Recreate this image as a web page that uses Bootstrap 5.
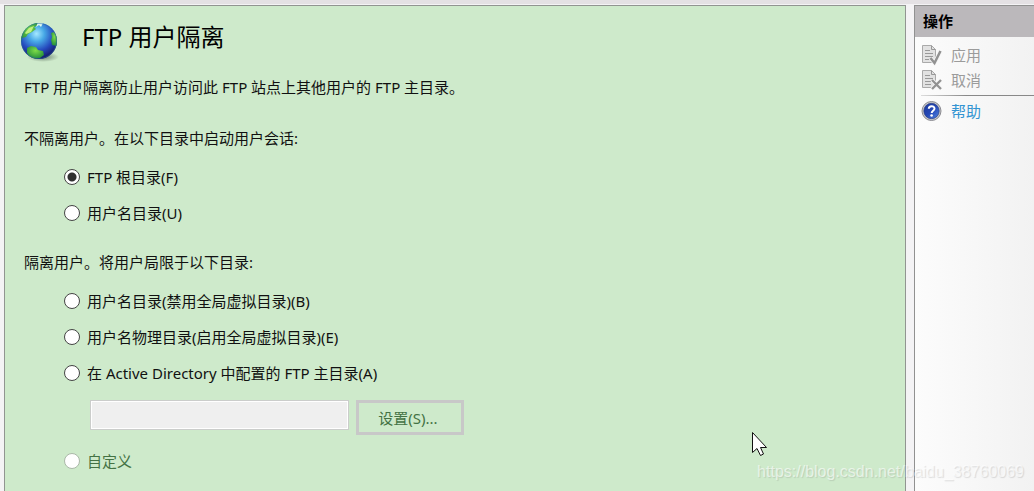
<!DOCTYPE html>
<html lang="zh-CN">
<head>
<meta charset="utf-8">
<meta name="viewport" content="width=device-width, initial-scale=1">
<title>FTP 用户隔离</title>
<link href="https://cdn.jsdelivr.net/npm/bootstrap@5.3.0/dist/css/bootstrap.min.css" rel="stylesheet">
<style>
  body { font: 15px/24px "Noto Sans", "Noto Sans CJK SC", sans-serif; color: #111; background: #f4f3f5; }
  .window-frame { border-top: 4px solid #e4e1e4; padding: 1px 0 0 4px; gap: 8px; }
  .feature-pane { background: #ceeacb; border: 1px solid #919591; border-bottom: 0; padding: 11px 19px 0; min-width: 0; }
  .feature-title { font-size: 24px; line-height: 40px; color: #000; }
  .feature-head { gap: 22px; height: 58px; }
  .globe { width: 42px; height: 42px; margin: 4px 0 0 -6px; }
  .intro { margin-bottom: 27px; }
  .choices { padding-left: 40px; margin-top: 9px; }
  .choice { height: 36px; gap: 7px; }
  .choice .form-check-input { width: 16px; height: 16px; margin: 0; border: 1px solid #444; background-color: #fff; flex: none; }
  .choice .form-check-input:checked { background: #fff radial-gradient(circle, #303030 4px, transparent 5px); }
  .choice .form-check-input:disabled { border-color: #aab8a8; opacity: 1; }
  .choice .form-check-input:disabled ~ label { color: #447244; opacity: 1; }
  .second-heading { margin-top: 19px; }
  .field-row { padding-left: 26px; margin: 9px 0 8px; gap: 7px; }
  .path-box { width: 259px; height: 30px; border: 1px solid #cbcdcb; border-radius: 0; box-shadow: inset 0 0 0 1px #fff; }
  .path-box:disabled { background: #efefef; }
  .set-btn, .set-btn:disabled { width: 108px; height: 35px; padding: 0 4px 0 0; font-size: 15px; line-height: 24px; border: 3px solid #c8c8c8; border-radius: 0; background: transparent; color: #447244; opacity: 1; }
  .action-pane { width: 120px; flex: none; border: 1px solid #919191; border-right: 0; border-bottom: 0; background: linear-gradient(90deg, #fcfcfc, #f2f2f2); }
  .action-title { font-size: 15px; line-height: 24px; font-weight: 700; color: #000; background: #bbb8bb; padding: 3px 8px 4px; }
  .action-list { padding: 5px 0 0 6px; }
  .action-item { display: flex; align-items: center; gap: 8px; height: 25px; padding: 0; border: 0; background: none; color: #9b9b9b; text-decoration: none; }
  .action-item svg { width: 22px; height: 22px; flex: none; }
  a.action-item { color: #3394d2; }
  .divider { height: 1px; margin: 3px 0 2px; background: linear-gradient(90deg, #ddd, #888 40%); }
  .pointer { right: 267px; bottom: 34px; width: 15px; height: 26px; }
  .watermark { right: 10px; bottom: 7px; font: 16px/24px "Liberation Sans", sans-serif; color: rgba(255,255,255,.6); text-shadow: 1px 1px 1px rgba(100,100,100,.2); }
</style>
</head>
<body>
<div class="window-frame d-flex min-vh-100 position-relative overflow-hidden">
  <main class="feature-pane flex-grow-1">
    <header class="feature-head d-flex align-items-start">
      <svg class="globe" viewBox="0 0 42 42" aria-hidden="true">
        <defs>
          <radialGradient id="sea" cx=".43" cy=".3" r=".68"><stop offset="0" stop-color="#a5e9ff"/><stop offset=".32" stop-color="#48a9e6"/><stop offset=".7" stop-color="#2548bd"/><stop offset="1" stop-color="#171d6e"/></radialGradient>
          <radialGradient id="land" cx=".5" cy=".35" r=".7"><stop offset="0" stop-color="#7edc48"/><stop offset="1" stop-color="#198439"/></radialGradient>
          <radialGradient id="shade"><stop offset="0" stop-color="#435549" stop-opacity=".7"/><stop offset="1" stop-color="#435549" stop-opacity="0"/></radialGradient>
          <clipPath id="ball"><circle cx="21" cy="20" r="18"/></clipPath>
        </defs>
        <ellipse cx="25" cy="36" rx="16" ry="5" fill="url(#shade)"/>
        <circle cx="21" cy="20" r="18" fill="url(#sea)"/>
        <g clip-path="url(#ball)" fill="url(#land)">
          <path d="M2 20V7L12 1l8 1-1 3-3 1 2 2-4 3-4 2-2 3-4 1-1 4z"/>
          <path d="m9 27 4-2 5 1 2 3 5 1 1 4-4 3-7 1-4-3-2-3z"/>
          <path d="m33 12 3-1 4 6-1 8-5-1-1-5 1-3z"/>
          <path d="m20 1 5 1-2 4-2-2-3 2z" fill="#e2f8ee"/>
          <path d="m7 12 4-5 5-2-3 6-5 2z" fill="#c0f080"/>
        </g>
        <circle cx="21" cy="20" r="17.5" fill="none" stroke="#246aa2" stroke-opacity=".5"/>
      </svg>
      <h1 class="feature-title fw-normal m-0">FTP 用户隔离</h1>
    </header>
    <p class="intro">FTP 用户隔离防止用户访问此 FTP 站点上其他用户的 FTP 主目录。</p>

    <p class="mb-0" id="shared">不隔离用户。在以下目录中启动用户会话:</p>
    <div class="choices" role="group" aria-labelledby="shared">
      <div class="choice d-flex align-items-center"><input class="form-check-input" type="radio" name="iso" id="root" checked><label for="root">FTP 根目录(F)</label></div>
      <div class="choice d-flex align-items-center"><input class="form-check-input" type="radio" name="iso" id="user"><label for="user">用户名目录(U)</label></div>
    </div>

    <p class="second-heading mb-0" id="isolated">隔离用户。将用户局限于以下目录:</p>
    <div class="choices" role="group" aria-labelledby="isolated">
      <div class="choice d-flex align-items-center"><input class="form-check-input" type="radio" name="iso" id="virt"><label for="virt">用户名目录(禁用全局虚拟目录)(B)</label></div>
      <div class="choice d-flex align-items-center"><input class="form-check-input" type="radio" name="iso" id="phys"><label for="phys">用户名物理目录(启用全局虚拟目录)(E)</label></div>
      <div class="choice d-flex align-items-center"><input class="form-check-input" type="radio" name="iso" id="dir"><label for="dir">在 Active Directory 中配置的 FTP 主目录(A)</label></div>
      <div class="field-row d-flex align-items-start">
        <input class="form-control path-box" type="text" aria-labelledby="dir" disabled>
        <button class="btn set-btn" type="button" disabled>设置(S)...</button>
      </div>
      <div class="choice d-flex align-items-center"><input class="form-check-input" type="radio" name="iso" id="custom" disabled><label for="custom">自定义</label></div>
    </div>
  </main>

  <aside class="action-pane">
    <h2 class="action-title m-0">操作</h2>
    <div class="action-list">
      <button class="action-item" type="button" disabled>
        <svg viewBox="0 0 22 22" aria-hidden="true"><path d="M1.5 1.5h9l4 4v13h-13z" fill="#e2e2e2" stroke="#aaa"/><path d="M10.500 1.500v4h4M4 6.500h5M4 9.500h8M4 12.500h8M4 15.500h6" fill="none" stroke="#999"/><path d="m9.500 14 4 5 6-12" fill="none" stroke="#f6f6f6" stroke-width="4"/><path d="m9.500 14 4 5 6-12" fill="none" stroke="#929292" stroke-width="2.500"/></svg>应用</button>
      <button class="action-item" type="button" disabled>
        <svg viewBox="0 0 22 22" aria-hidden="true"><path d="M1.500 1.500h9l4 4v13h-13z" fill="#e2e2e2" stroke="#aaa"/><path d="M10.500 1.500v4h4M4 6.500h5M4 9.500h8M4 12.500h8M4 15.500h6" fill="none" stroke="#999"/><path d="m11 11 9 9m0-9-9 9" stroke="#f6f6f6" stroke-width="4"/><path d="m11 11 9 9m0-9-9 9" stroke="#929292" stroke-width="2.300"/></svg>取消</button>
      <div class="divider"></div>
      <a class="action-item" href="#">
        <svg viewBox="0 0 22 22" aria-hidden="true"><defs><linearGradient id="help" x2="1" y2="1"><stop stop-color="#1c3a9c"/><stop offset=".5" stop-color="#2447b5"/><stop offset="1" stop-color="#5386e4"/></linearGradient></defs><circle cx="10.500" cy="11" r="9.500" fill="#c9c9cc" stroke="#8b8b91"/><circle cx="10.500" cy="11" r="7.700" fill="url(#help)" stroke="#24377b" stroke-width=".6"/><path d="M7.800 8.800c0-3.500 5.700-3.500 5.700-.2 0 2.200-2.800 2.200-2.800 4.300" fill="none" stroke="#fff" stroke-width="2"/><circle cx="10.600" cy="15.500" r="1.300" fill="#fff"/></svg>帮助</a>
    </div>
  </aside>

  <svg class="pointer position-absolute pe-none" viewBox="0 0 15 26" aria-hidden="true"><path d="M.5 1.500v20l4.500-4 3.500 7 3-1.500-3-6.500h6z" fill="#fff" stroke="#111"/></svg>
  <div class="watermark position-absolute pe-none">https://blog.csdn.net/baidu_38760069</div>
</div>
<script src="https://cdn.jsdelivr.net/npm/bootstrap@5.3.0/dist/js/bootstrap.bundle.min.js"></script>
</body>
</html>
